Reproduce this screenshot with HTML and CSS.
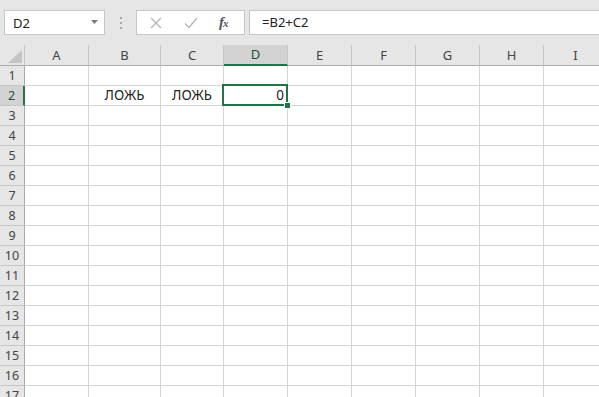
FILE: index.html
```html
<!DOCTYPE html>
<html lang="ru">
<head>
    <meta charset="UTF-8">
    <title>Книга1 - Excel</title>
    <link rel="stylesheet" href="styles.css">
</head>
<body>
    <div class="toolbar">
        <div class="name-box">
            <span>D2</span>
            <svg class="drop" width="7" height="4" viewBox="0 0 7 4"><path d="M0 0h7L3.5 4z" fill="#7a7a7a"/></svg>
        </div>
        <div class="grip">
            <i></i><i></i><i></i>
        </div>
        <div class="fx-buttons">
            <svg width="12" height="12" viewBox="0 0 12 12"><path d="M1 1l10 10M11 1L1 11" stroke="#b4b4b4" stroke-width="1.3" fill="none"/></svg>
            <svg width="14" height="12" viewBox="0 0 14 12"><path d="M1 6.5l4 4L13 1" stroke="#b4b4b4" stroke-width="1.3" fill="none"/></svg>
            <span class="fx">f<sub>x</sub></span>
        </div>
        <div class="formula">=B2+C2</div>
    </div>

    <div class="sheet" id="sheet">
        <div class="corner"><svg width="14" height="13" viewBox="0 0 14 13"><path d="M14 0v13H0z" fill="#c4c4c4"/></svg></div>
        <!-- headers and rows are built below -->
    </div>

    <script src="script.js"></script>
</body>
</html>
```

FILE: script.js
```js
const sheet = document.getElementById('sheet');
const cols = ['A', 'B', 'C', 'D', 'E', 'F', 'G', 'H', 'I'];
const data = { B2: 'ЛОЖЬ', C2: 'ЛОЖЬ', D2: '0' };

cols.forEach(c => {
    const h = document.createElement('div');
    h.className = 'col-head' + (c === 'D' ? ' active' : '');
    h.textContent = c;
    sheet.appendChild(h);
});

for (let r = 1; r <= 17; r++) {
    const rh = document.createElement('div');
    rh.className = 'row-head' + (r === 2 ? ' active' : '');
    rh.textContent = r;
    sheet.appendChild(rh);

    cols.forEach(c => {
        const cell = document.createElement('div');
        const key = c + r;
        cell.className = 'cell';
        if (data[key]) {
            cell.textContent = data[key];
            cell.classList.add(isNaN(data[key]) ? 'text' : 'num');
        }
        if (key === 'D2') cell.classList.add('selected');
        sheet.appendChild(cell);
    });
}
```

FILE: styles.css
```css
body {
    margin: 0;
    background-color: #ffffff;
    font-family: "Noto Sans", Arial, sans-serif;
    color: #222;
    overflow: hidden;
}

.toolbar {
    display: flex;
    align-items: center;
    height: 45px;
    padding: 0 0 0 4px;
    background-color: #e6e6e6;
    box-sizing: border-box;
}

.name-box {
    display: flex;
    align-items: center;
    justify-content: space-between;
    width: 101px;
    height: 25px;
    padding: 0 6px 0 8px;
    background-color: #fff;
    border: 1px solid #c6c6c6;
    box-sizing: border-box;
    font-size: 13px;
}

.drop {
    margin-top: -2px;
}

.grip {
    display: flex;
    flex-direction: column;
    gap: 3px;
    width: 31px;
    align-items: center;
}

.grip i {
    width: 2px;
    height: 2px;
    background-color: #a8a8a8;
}

.fx-buttons {
    display: flex;
    align-items: center;
    width: 109px;
    height: 25px;
    padding-left: 13px;
    background-color: #fff;
    border: 1px solid #c6c6c6;
    box-sizing: border-box;
}

.fx-buttons svg:first-child {
    margin-right: 22px;
}

.fx-buttons svg:nth-child(2) {
    margin-right: 21px;
}

.fx {
    font-family: "Liberation Serif", serif;
    font-style: italic;
    font-weight: bold;
    font-size: 15px;
    color: #555;
    line-height: 1;
}

.fx sub {
    font-size: 11px;
    vertical-align: 0;
    margin-left: -1px;
}

.formula {
    flex: 1;
    height: 25px;
    margin-left: 4px;
    padding-left: 12px;
    background-color: #fff;
    border: 1px solid #c6c6c6;
    border-right: none;
    box-sizing: border-box;
    font-size: 13px;
    line-height: 23px;
}

.sheet {
    display: grid;
    grid-template-columns: 25px 64px 72px 63px 64px 64px 64px 64px 64px 64px;
    grid-template-rows: 21px;
    grid-auto-rows: 20px;
    width: 608px;
}

.corner {
    display: flex;
    align-items: flex-end;
    justify-content: flex-end;
    padding: 0 2px 2px 0;
    background-color: #e6e6e6;
    border-bottom: 1px solid #ababab;
    border-right: 1px solid #c6c6c6;
}

.col-head {
    background-color: #e6e6e6;
    border-right: 1px solid #c6c6c6;
    border-bottom: 1px solid #ababab;
    text-align: center;
    font-size: 13px;
    line-height: 20px;
    color: #444;
}

.col-head.active {
    background-color: #d2d2d2;
    border-bottom: 2px solid #217346;
    line-height: 19px;
    color: #1f5134;
}

.row-head {
    background-color: #e6e6e6;
    border-right: 1px solid #ababab;
    border-bottom: 1px solid #c6c6c6;
    text-align: center;
    font-size: 12.5px;
    line-height: 19px;
    color: #444;
}

.row-head.active {
    background-color: #d2d2d2;
    border-right: 2px solid #217346;
    color: #1f5134;
}

.cell {
    border-right: 1px solid #d4d4d4;
    border-bottom: 1px solid #d4d4d4;
    font-size: 13.5px;
    line-height: 19px;
    padding: 0 3px;
    white-space: nowrap;
}

.cell.text {
    text-align: center;
}

.cell.num {
    text-align: right;
}

.cell.selected {
    position: relative;
    z-index: 1;
}

.cell.selected::before {
    content: "";
    position: absolute;
    left: -2px;
    right: -1px;
    top: -2px;
    bottom: -1px;
    border: 2px solid #217346;
}

.cell.selected::after {
    content: "";
    position: absolute;
    right: -4px;
    bottom: -4px;
    width: 5px;
    height: 5px;
    background-color: #217346;
    border: 1px solid #fff;
}
```
